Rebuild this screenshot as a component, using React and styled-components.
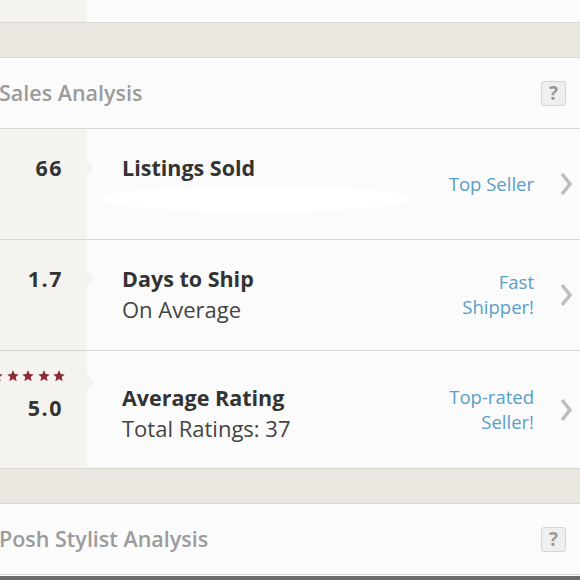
import React from "react";
import styled, { createGlobalStyle } from "styled-components";

const GlobalStyle = createGlobalStyle`
  body {
    margin: 0;
    background: #fbfbfb;
    font-family: "Open Sans", Lato, sans-serif;
    overflow: hidden;
  }
`;

const Page = styled.div`
  width: 580px;
  height: 580px;
  overflow: hidden;
  background: #fbfbfb;
  display: flex;
  flex-direction: column;
`;

const Stub = styled.div`
  height: 22px;
  display: flex;
  border-bottom: 1px solid #d9d7d3;
`;

const Side = styled.div`
  width: 87px;
  flex-shrink: 0;
  background: #f4f3f0;
  position: relative;
`;

const Band = styled.div`
  height: 34px;
  flex-shrink: 0;
  background: #ebe7e1;
  border-bottom: 1px solid #d9d7d3;
`;

const Header = styled.div`
  height: 70px;
  flex-shrink: 0;
  display: flex;
  align-items: center;
  justify-content: space-between;
  padding-right: 14px;
  border-bottom: 1px solid #d9d7d3;
`;

const HeaderTitle = styled.div`
  font-size: 21.5px;
  font-weight: 600;
  color: #9b9b9b;
  margin-left: -1px;
  margin-top: -2px;
`;

const Help = styled.div`
  width: 23px;
  height: 23px;
  border: 1px solid #d6d6d6;
  border-radius: 3px;
  background: #f0efed;
  color: #9a9a9a;
  font-weight: 700;
  font-size: 19px;
  display: flex;
  align-items: center;
  justify-content: center;
`;

const Row = styled.div`
  height: ${(p) => p.$h}px;
  flex-shrink: 0;
  display: flex;
  border-bottom: 1px solid #d9d7d3;
`;

const Stat = styled(Side)`
  padding-top: ${(p) => p.$top}px;
  box-sizing: border-box;
  display: flex;
  flex-direction: column;
  align-items: flex-end;
  padding-right: 24px;

  &::after {
    content: "";
    position: absolute;
    right: -7px;
    top: ${(p) => p.$top + 7}px;
    border-left: 7px solid #f4f3f0;
    border-top: 8px solid transparent;
    border-bottom: 8px solid transparent;
  }
`;

const Value = styled.div`
  font-size: 21.5px;
  font-weight: 700;
  color: #333;
  line-height: 30px;
  letter-spacing: 1.5px;
`;

const Stars = styled.div`
  display: flex;
  flex-shrink: 0;
  gap: 3.5px;
  margin-right: -2px;
  height: 30px;
  align-items: center;
  margin-top: -6px;
  margin-bottom: 2px;
`;

const Body = styled.div`
  flex: 1;
  padding-left: 35px;
  padding-top: ${(p) => p.$top}px;
  position: relative;
`;

const Title = styled.div`
  font-size: 21.5px;
  font-weight: 700;
  color: #333;
  line-height: 30px;
`;

const Sub = styled.div`
  font-size: 22px;
  color: #444;
  line-height: 30px;
`;

const Smudge = styled.div`
  position: absolute;
  left: 12px;
  top: 57px;
  width: 314px;
  height: 26px;
  background: #fff;
  border-radius: 50%;
  filter: blur(1.5px);
`;

const Badge = styled.div`
  display: flex;
  align-items: center;
  gap: 25px;
  padding-right: 7px;
`;

const BadgeText = styled.div`
  text-align: right;
  color: #5a9ec8;
  font-size: 18.5px;
  line-height: 25px;
  margin-top: -2px;
`;

const Footer = styled.div`
  flex: 1;
  border-top: 1px solid #fbfbfb;
  background: #6b6b6b;
`;

const Chevron = () => (
  <svg width="14" height="26" viewBox="0 0 14 26">
    <path d="M3 3 L11 13 L3 23" fill="none" stroke="#bdbdbd" strokeWidth="3.5" />
  </svg>
);

const Star = () => (
  <svg width="12" height="12" viewBox="1 1 22 22" style={{ flexShrink: 0 }}>
    <path
      d="M12 1.5l3.1 7 7.4.6-5.6 4.9 1.7 7.5L12 17.6l-6.6 3.9 1.7-7.5L1.5 9.1l7.4-.6z"
      fill="#8c2b36"
    />
  </svg>
);

const stats = [
  { value: "66", title: "Listings Sold", badge: ["Top Seller"], h: 110, top: 24, smudge: true },
  { value: "1.7", title: "Days to Ship", sub: "On Average", badge: ["Fast", "Shipper!"], h: 110, top: 24 },
  {
    value: "5.0",
    title: "Average Rating",
    sub: "Total Ratings: 37",
    badge: ["Top-rated", "Seller!"],
    h: 117,
    top: 32,
    stars: true,
  },
];

const App = () => {
  return (
    <Page>
      <GlobalStyle />
      <Stub>
        <Side />
      </Stub>
      <Band />
      <Header>
        <HeaderTitle>Sales Analysis</HeaderTitle>
        <Help>?</Help>
      </Header>
      {stats.map((s) => (
        <Row key={s.title} $h={s.h}>
          <Stat $top={s.stars ? 16 : s.top}>
            {s.stars && (
              <Stars>
                {[0, 1, 2, 3, 4].map((i) => (
                  <Star key={i} />
                ))}
              </Stars>
            )}
            <Value>{s.value}</Value>
          </Stat>
          <Body $top={s.top}>
            <Title>{s.title}</Title>
            {s.sub && <Sub>{s.sub}</Sub>}
            {s.smudge && <Smudge />}
          </Body>
          <Badge>
            <BadgeText>
              {s.badge.map((b) => (
                <div key={b}>{b}</div>
              ))}
            </BadgeText>
            <Chevron />
          </Badge>
        </Row>
      ))}
      <Band />
      <Header>
        <HeaderTitle>Posh Stylist Analysis</HeaderTitle>
        <Help>?</Help>
      </Header>
      <Footer />
    </Page>
  );
};

export default App;
